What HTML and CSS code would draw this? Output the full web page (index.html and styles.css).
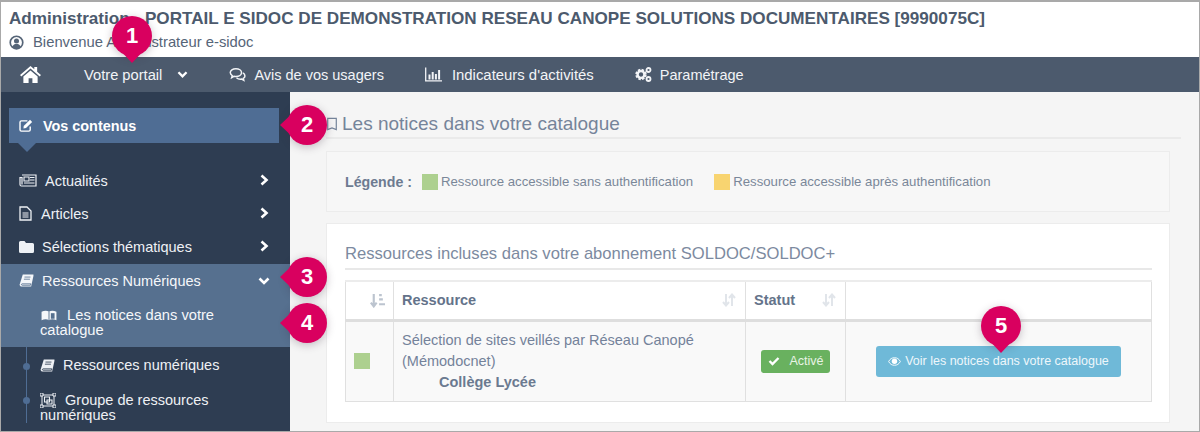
FILE: index.html
```html
<!DOCTYPE html>
<html lang="fr">
<head>
<meta charset="utf-8">
<title>Administration</title>
<link rel="stylesheet" href="styles.css">
</head>
<body>
<svg class="defs" width="0" height="0" aria-hidden="true">
  <symbol id="chev-r" viewBox="0 0 10 12"><path d="M2.500 1.500 7.500 6l-5 4.500" fill="none" stroke="currentColor" stroke-width="2.600"/></symbol>
  <symbol id="chev-d" viewBox="0 0 12 10"><path d="M1.500 2.500 6 7l4.500-4.500" fill="none" stroke="currentColor" stroke-width="2.600"/></symbol>
  <symbol id="sort" viewBox="0 0 14 14"><path d="M4 1v11M1 9l3 3.500L7 9M10 13V2M7 5l3-3.500L13 5" fill="none" stroke="currentColor" stroke-width="2"/></symbol>
  <symbol id="book" viewBox="0 0 16 14"><path d="M4 .5h11.500V2L13 13.500H3C1.500 13.500.5 12.500.7 11z" fill="currentColor"/><path d="M3.200 10.600h9.500l-.4 1.500H3.200c-.9 0-.9-1.500 0-1.500zM5.800 3.300h6.500M5.200 5.600h6.500" fill="none" stroke="var(--slit)" stroke-width=".9"/></symbol>
  <symbol id="openbook" viewBox="0 0 18 14"><path d="M1 3c3-1.500 6-1.500 8 0 2-1.500 5-1.500 8 0v9c-3-1.200-6-1.200-8 0-2-1.200-5-1.200-8 0z" fill="currentColor"/><path d="M9 3v9" stroke="#56708f" stroke-width="1"/><path d="M11 4.500h4v6h-4z" fill="#56708f"/></symbol>
</svg>
<div class="frame">
  <header class="top">
    <h1 class="top-title">Administration - PORTAIL E SIDOC DE DEMONSTRATION RESEAU CANOPE SOLUTIONS DOCUMENTAIRES [9990075C]</h1>
    <p class="top-user">
      <svg class="user-icon" viewBox="0 0 16 16"><circle cx="8" cy="8" r="6.700" fill="none" stroke="currentColor" stroke-width="1.800"/><circle cx="8" cy="6.300" r="2.700" fill="currentColor"/><path d="M3.500 12.500c1-2.500 2.500-3 4.500-3s3.500.5 4.500 3c-1.200 1.200-2.800 2-4.500 2s-3.300-.8-4.500-2z" fill="currentColor"/></svg>
      Bienvenue Administrateur e-sidoc
    </p>
  </header>

  <nav class="nav">
    <svg class="nav-home" viewBox="0 0 24 20"><path d="M12 1 1 10.500l1.300 1.500L12 3.800 21.700 12l1.300-1.500-4-3.400V2h-3v2.500z" fill="currentColor"/><path d="M4.500 12 12 5.700l7.500 6.300v7h-5.500v-5h-4v5H4.500z" fill="currentColor"/></svg>
    <span class="nav-item nav-portal">Votre portail <svg class="nav-chev"><use href="#chev-d"/></svg></span>
    <span class="nav-item nav-avis">
      <svg class="nav-icon" viewBox="0 0 16 14"><path d="M6.500 1.500c3 0 5.300 1.600 5.300 3.700S9.500 8.900 6.500 8.900c-.7 0-1.300-.1-1.900-.2L2.500 10l.5-2C1.900 7.300 1.200 6.300 1.200 5.200c0-2.100 2.300-3.700 5.300-3.700z" fill="none" stroke="currentColor" stroke-width="1.400"/><path d="M13 5.500c1.200.6 2 1.700 2 2.800 0 1-.6 1.800-1.500 2.400l.4 1.800-2-1.200c-1.800.3-3.700-.2-4.900-1.200" fill="none" stroke="currentColor" stroke-width="1.400"/></svg>
      Avis de vos usagers
    </span>
    <span class="nav-item nav-stats">
      <svg class="nav-icon" viewBox="0 0 17 14"><path d="M.7 0v13.300H17" fill="none" stroke="currentColor" stroke-width="1.300"/><path d="M3.500 7h2v5h-2zM6.700 4.500h2V12h-2zM9.900 6.500h2V12h-2zM13.100 2.500h2V12h-2z" fill="currentColor"/></svg>
      Indicateurs d'activités
    </span>
    <span class="nav-item nav-param">
      <svg class="nav-icon" viewBox="0 0 17 15"><circle cx="6" cy="7.500" r="4.200" fill="none" stroke="currentColor" stroke-width="3" stroke-dasharray="2.200 1.100"/><circle cx="6" cy="7.500" r="3.400" fill="none" stroke="currentColor" stroke-width="2.400"/><circle cx="13.500" cy="3" r="2" fill="none" stroke="currentColor" stroke-width="1.800"/><circle cx="13.500" cy="12" r="2" fill="none" stroke="currentColor" stroke-width="1.800"/></svg>
      Paramétrage
    </span>
  </nav>

  <div class="body">
    <aside class="side">
      <div class="side-head">
        <svg class="side-head-icon" viewBox="0 0 16 14"><path d="M12 8v3.500a1.500 1.500 0 0 1-1.500 1.500h-8A1.500 1.500 0 0 1 1 11.500v-8A1.500 1.500 0 0 1 2.500 2H9" fill="none" stroke="currentColor" stroke-width="1.500"/><path d="M5 7.500 11.800.9l2.300 2.300L7.500 9.800 4.700 10.300z" fill="currentColor"/></svg>
        Vos contenus
      </div>
      <ul class="side-list">
        <li class="side-row">
          <svg class="ic ic-news" viewBox="0 0 18 13"><path d="M3 1h14v11H2.500C1.500 12 1 11.500 1 10.500V3.500h2v7" fill="none" stroke="currentColor" stroke-width="1.200"/><path d="M5 3h5v4H5zM11 3.500h4.500M11 6h4.500M5 9h10.500" fill="none" stroke="currentColor" stroke-width="1.100"/></svg>
          <span class="lbl">Actualités</span>
          <svg class="chev"><use href="#chev-r"/></svg>
        </li>
        <li class="side-row">
          <svg class="ic ic-doc" viewBox="0 0 13 15"><path d="M1 1h7l4 4v9H1z" fill="none" stroke="currentColor" stroke-width="1.300"/><path d="M3.500 7h6M3.500 9h6M3.500 11h6" stroke="currentColor" stroke-width="1"/></svg>
          <span class="lbl">Articles</span>
          <svg class="chev"><use href="#chev-r"/></svg>
        </li>
        <li class="side-row">
          <svg class="ic ic-folder" viewBox="0 0 15 12"><path d="M1.500 0h4l1.500 2h6.500A1.500 1.500 0 0 1 15 3.500v7a1.500 1.500 0 0 1-1.500 1.500h-12A1.500 1.500 0 0 1 0 10.500v-9A1.500 1.500 0 0 1 1.500 0z" fill="currentColor"/></svg>
          <span class="lbl">Sélections thématiques</span>
          <svg class="chev"><use href="#chev-r"/></svg>
        </li>
        <li class="side-row side-row-on">
          <svg class="ic ic-book"><use href="#book"/></svg>
          <span class="lbl">Ressources Numériques</span>
          <svg class="chev-open"><use href="#chev-d"/></svg>
        </li>
      </ul>
      <div class="sub-on">
        <svg class="sub-icon sub-open"><use href="#openbook"/></svg>&nbsp;Les notices dans votre catalogue
      </div>
      <ul class="sub-list">
        <li class="sub-row sub-single">
          <svg class="sub-icon sub-book"><use href="#book"/></svg>&nbsp;Ressources numériques
        </li>
        <li class="sub-row sub-double">
          <svg class="sub-icon sub-group" viewBox="0 0 16 15"><path d="M2 2h12v11H2z" fill="none" stroke="currentColor" stroke-width="1"/><path d="M4.500 4h5v5h-5zM7 7h5v4H7z" fill="none" stroke="currentColor" stroke-width="1.100"/><path d="M0 0h3v3H0zM13 0h3v3h-3zM0 12h3v3H0zM13 12h3v3h-3z" fill="#2e3d52" stroke="currentColor" stroke-width="1"/></svg>&nbsp;Groupe de ressources numériques
        </li>
      </ul>
    </aside>

    <main class="main">
      <h2 class="page-title">
        <svg class="page-icon" viewBox="0 0 14 15"><path d="M2 1h10v13l-5-2-5 2z" fill="none" stroke="currentColor" stroke-width="1.400"/></svg>
        Les notices dans votre catalogue
      </h2>
      <section class="legend">
        <strong class="legend-label">Légende :</strong>
        <span class="swatch swatch-green"></span>
        <span class="legend-text legend-text-a">Ressource accessible sans authentification</span>
        <span class="swatch swatch-yellow"></span>
        <span class="legend-text">Ressource accessible après authentification</span>
      </section>
      <section class="panel">
        <h3 class="panel-title">Ressources incluses dans votre abonnement SOLDOC/SOLDOC+</h3>
        <table class="table">
          <colgroup><col class="c1"><col class="c2"><col class="c3"><col class="c4"></colgroup>
          <thead>
            <tr>
              <th class="th-sort"><svg class="sort-first" viewBox="0 0 14 14"><path d="M3.500 1v11M.8 9l2.700 3.500L6.200 9" fill="none" stroke="currentColor" stroke-width="2"/><path d="M8.500 1h2.500v2H8.500zM8.500 5h3.500v2H8.500zM8.500 9.500H14v2H8.500z" fill="currentColor"/></svg></th>
              <th><span class="th-in">Ressource<svg class="sort"><use href="#sort"/></svg></span></th>
              <th><span class="th-in">Statut<svg class="sort"><use href="#sort"/></svg></span></th>
              <th></th>
            </tr>
          </thead>
          <tbody>
            <tr>
              <td class="td-swatch"><span class="swatch swatch-green swatch-row"></span></td>
              <td class="td-res">Sélection de sites veillés par Réseau Canopé (Mémodocnet)<br><strong class="level">Collège Lycée</strong></td>
              <td class="td-center"><span class="badge"><svg class="badge-check" viewBox="0 0 12 10"><path d="M1.500 5 4.500 8l6-6" fill="none" stroke="currentColor" stroke-width="2.400"/></svg>Activé</span></td>
              <td class="td-center"><span class="btn"><svg class="btn-eye" viewBox="0 0 14 10"><path d="M.5 5C2 2 4.300.8 7 .8S12 2 13.500 5C12 8 9.700 9.200 7 9.200S2 8 .5 5z" fill="none" stroke="currentColor" stroke-width="1"/><circle cx="7" cy="4.800" r="3" fill="currentColor"/></svg>Voir les notices dans votre catalogue</span></td>
            </tr>
          </tbody>
        </table>
      </section>
    </main>
  </div>

  <span class="pin pin-down pin-1">1</span>
  <span class="pin pin-left pin-2">2</span>
  <span class="pin pin-left pin-3">3</span>
  <span class="pin pin-left pin-4">4</span>
  <span class="pin pin-down pin-5">5</span>
</div>
</body>
</html>
```

FILE: styles.css
```css
* { box-sizing: border-box; }
html, body { margin: 0; height: 100%; }
body { font-family: "Liberation Sans", Arial, sans-serif; background: #fff; overflow: hidden; }
.defs { position: absolute; }
ul { list-style: none; margin: 0; padding: 0; }

.frame {
  position: relative;
  width: 1200px;
  height: 432px;
  border: solid #a9a9a9;
  border-width: 2px 1px 1px 1px;
  display: flex;
  flex-direction: column;
  overflow: hidden;
}

.top { height: 55px; background: #fff; padding: 7px 0 0 8px; color: #4c5a6d; flex: none; }
.top-title { margin: 0; font-size: 17.120px; line-height: 20px; font-weight: 700; white-space: nowrap; }
.top-user { margin: 5px 0 0; font-size: 14.800px; line-height: 16px; display: flex; align-items: center; color: #566578; }
.user-icon { width: 15px; height: 15px; margin-right: 9px; }

.nav { height: 35px; flex: none; background: #4c5a6d; color: #f2f4f7; display: flex; align-items: center; font-size: 14.700px; }
.nav-home { width: 23px; height: 19px; margin-left: 18px; color: #fff; flex: none; }
.nav-item { display: inline-flex; align-items: center; white-space: nowrap; }
.nav-portal { margin-left: 42px; }
.nav-avis { margin-left: 41px; font-size: 14.500px; }
.nav-stats { margin-left: 41px; font-size: 14.900px; }
.nav-param { margin-left: 41px; font-size: 14.500px; }
.nav-icon { width: 17px; height: 15px; margin-right: 8px; }
.nav-stats .nav-icon { margin-right: 10px; }
.nav-chev { width: 11px; height: 9px; margin-left: 15px; color: #fff; }

.body { flex: 1; display: flex; min-height: 0; }

.side { width: 289px; flex: none; background: #2e3d52; color: #eef1f5; padding-top: 16px; font-size: 14.500px; }
.side-head {
  position: relative;
  margin-left: 8px;
  width: 270px;
  height: 35px;
  background: #4f6d94;
  color: #fff;
  font-weight: 700;
  font-size: 14.400px;
  display: flex;
  align-items: center;
  padding-left: 10px;
}
.side-head::after {
  content: "";
  position: absolute;
  left: 9px;
  top: 35px;
  border: solid transparent;
  border-width: 9px 9px 0;
  border-top-color: #4f6d94;
}
.side-head-icon { width: 15px; height: 13px; margin-right: 9px; }

.side-list { margin-top: 21px; }
.side-row { height: 33px; display: flex; align-items: center; position: relative; padding-left: 18px; }
.side-row-on { margin-top: 1px; background: #56708f; color: #f5f7fa; }
.ic { flex: none; }
.ic-news { width: 18px; height: 13px; margin-right: 8px; }
.ic-doc { width: 13px; height: 15px; margin-right: 9px; }
.ic-folder { width: 15px; height: 12px; margin-right: 8px; }
.ic-book { width: 15px; height: 13px; margin-right: 8px; --slit: #56708f; }
.lbl { white-space: nowrap; }
.chev { position: absolute; left: 258px; top: 10px; width: 10px; height: 12px; color: #fff; }
.chev-open { position: absolute; left: 257px; top: 12px; width: 12px; height: 10px; color: #fff; }

.sub-on { height: 50px; background: #56708f; padding: 11px 30px 0 39px; line-height: 15px; color: #f5f7fa; font-size: 14.700px; }
.sub-icon { display: inline-block; vertical-align: -2px; }
.sub-open { width: 18px; height: 13px; margin-right: 5px; }
.sub-list { position: relative; font-size: 14.500px; color: #eef1f5; }
.sub-list::before { content: ""; position: absolute; left: 25px; top: 0; bottom: 0; width: 1px; background: #4f6d94; }
.sub-row { position: relative; padding: 0 30px 0 39px; line-height: 15px; }
.sub-row::before { content: ""; position: absolute; left: 22px; width: 7px; height: 7px; border-radius: 50%; background: #4f6d94; }
.sub-single { padding-top: 11px; height: 37px; }
.sub-single::before { top: 16px; }
.sub-double { padding-top: 9px; }
.sub-double::before { top: 13px; }
.sub-book { width: 15px; height: 13px; margin-right: 4px; --slit: #2e3d52; }
.sub-group { width: 16px; height: 15px; margin-right: 5px; vertical-align: -3px; }

.main { flex: 1; background: #f5f5f5; color: #6b7a90; padding: 0 29px 0 36px; min-width: 0; }
.page-title { margin: 0 -11px 0 0; height: 47px; padding: 18px 0 0 0; font-weight: 400; font-size: 19px; line-height: 24px; color: #75849a; border-bottom: 2px solid #eaeaea; display: flex; align-items: center; }
.page-icon { width: 12px; height: 14px; margin-right: 4px; flex: none; }

.legend { margin-top: 12px; height: 61px; border: 1px solid #ececec; background: #f7f7f7; display: flex; align-items: center; padding-left: 18px; font-size: 13.200px; }
.legend-label { font-size: 14.200px; color: #6d7b91; margin-right: 10px; }
.swatch { display: inline-block; width: 16px; height: 16px; flex: none; }
.swatch-green { background: #add08f; }
.swatch-yellow { background: #f8d470; }
.legend-text { margin-left: 3px; color: #7a8799; }
.legend-text-a { margin-right: 21px; }

.panel { margin-top: 11px; height: 200px; background: #fff; border: 1px solid #ececec; padding: 0 17px 0 18px; }
.panel-title { margin: 0; height: 46px; padding-top: 19px; font-weight: 400; font-size: 16.600px; line-height: 22px; color: #7c8aa0; border-bottom: 2px solid #e8e8e8; white-space: nowrap; }

.table { margin-top: 10px; width: 807px; border-collapse: collapse; table-layout: fixed; border: 1px solid #dedede; border-top: 2px solid #ececec; font-size: 14.500px; }
.c1 { width: 48px; }
.c2 { width: 352px; }
.c3 { width: 100px; }
.table th, .table td { border: 1px solid #e0e0e0; padding: 0; }
.table th { height: 39px; text-align: left; color: #64738a; font-size: 14.500px; background: #fff; border-bottom: 3px solid #dedede; }
.th-sort { text-align: right !important; padding-right: 8px !important; color: #b7c0cc; }
.th-in { display: flex; align-items: center; justify-content: space-between; padding: 0 9px 0 8px; }
.sort { width: 14px; height: 14px; color: #e1e5ea; }
.sort-first { width: 15px; height: 15px; display: block; margin-left: auto; color: #bcc4cf; }
.table td { background: #f9f9f9; height: 81px; color: #74829a; }
.td-swatch { padding-left: 8px !important; }
.swatch-row { display: block; }
.td-res { padding: 0 8px !important; line-height: 21px; }
.level { display: block; padding-left: 37px; color: #6b7a90; }
.td-center { text-align: center; }
.badge { display: inline-flex; align-items: center; height: 23px; padding: 0 6px 0 7px; background: #69b15f; border-radius: 3px; color: #e8f3e5; font-size: 12.500px; }
.badge-check { width: 12px; height: 10px; margin-right: 9px; color: #fff; }
.btn { display: inline-flex; align-items: center; justify-content: center; width: 245px; height: 31px; background: #6fb9d8; border-radius: 3px; color: #eef7fb; font-size: 12.500px; }
.btn-eye { width: 13px; height: 9px; margin-right: 4px; color: #fff; }

.pin {
  position: absolute;
  width: 40px;
  height: 40px;
  border-radius: 50%;
  background: #d9005f;
  color: #fff;
  font-size: 22px;
  font-weight: 700;
  line-height: 40px;
  text-align: center;
  box-shadow: 0 2px 9px rgba(60, 40, 60, .28);
}
.pin::after { content: ""; position: absolute; border: solid transparent; }
.pin-down::after { left: 4px; top: 30px; border-width: 17px 16px 0; border-top-color: #d9005f; }
.pin-left::after { right: 30px; top: 4px; border-width: 16px 17px 16px 0; border-right-color: #d9005f; }
.pin-1 { left: 111px; top: 14px; }
.pin-2 { left: 286px; top: 103px; }
.pin-3 { left: 286px; top: 255px; }
.pin-4 { left: 286px; top: 301px; }
.pin-5 { left: 980px; top: 304px; }
```
